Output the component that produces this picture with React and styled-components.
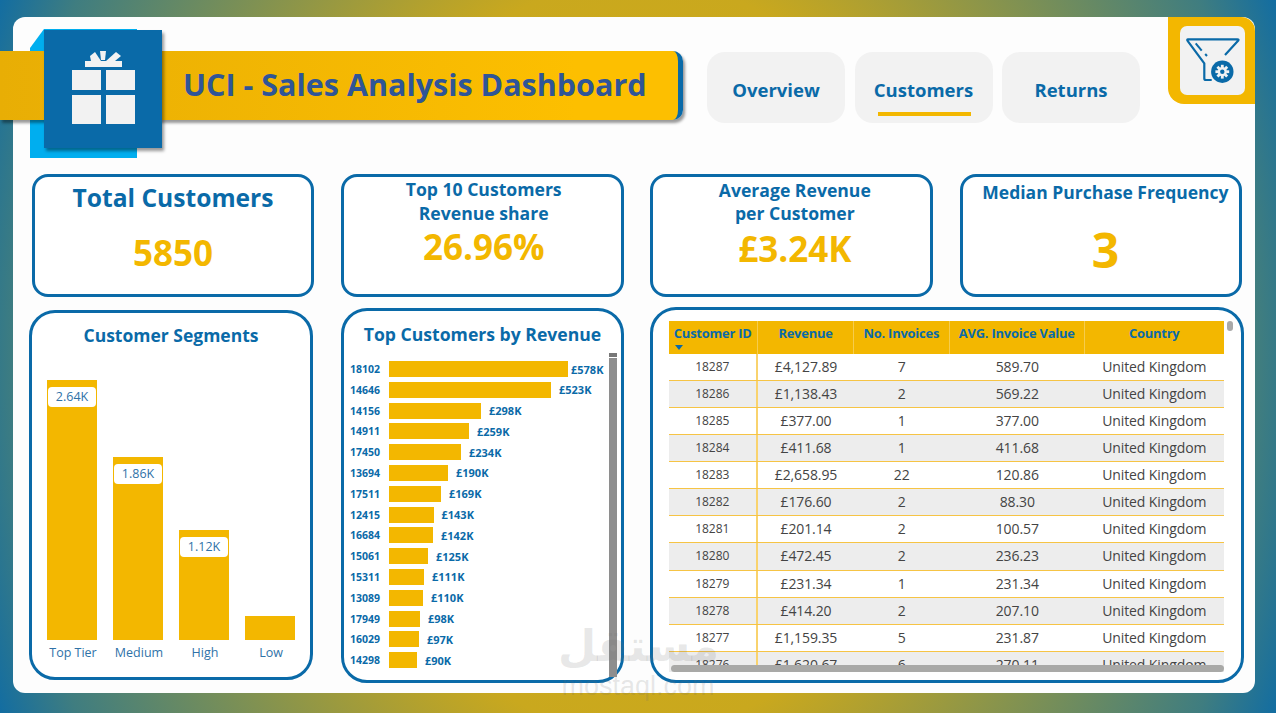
import React from "react";
import styled, { createGlobalStyle } from "styled-components";

const BLUE = "#0a6aa8";
const GOLD = "#f3b700";

const GlobalStyle = createGlobalStyle`
  html, body {
    margin: 0;
    padding: 0;
    width: 1276px;
    height: 713px;
    overflow: hidden;
    font-family: "Open Sans", "Noto Sans", sans-serif;
  }
`;

const Page = styled.div`
  width: 1276px;
  height: 713px;
  padding: 17px 21px 20px 13px;
  box-sizing: border-box;
  position: relative;
  overflow: hidden;
  background:
    radial-gradient(ellipse 760px 1000px at 50% 50%, #d6ad10 0%, #c9a81e 38%, #3f7d80 82%, #0a6aa8 93%);
`;

const Panel = styled.div`
  width: 1242px;
  height: 676px;
  background: #fdfdfd;
  border-radius: 12px;
  box-sizing: border-box;
`;

const Header = styled.header`
  display: flex;
  align-items: flex-start;
  height: 157px;
`;

const Brand = styled.div`
  position: relative;
  margin: 34px 0 0 -13px;
  width: 683px;
  height: 69px;
  flex: none;
`;

const Ribbon = styled.div`
  position: relative;
  height: 100%;
  box-sizing: border-box;
  padding: 0 0 3px 183px;
  display: flex;
  align-items: center;
  background: linear-gradient(90deg, #e8ae05 0%, #fdbf00 85%);
  border-right: 5px solid ${BLUE};
  border-radius: 0 10px 10px 0;
  box-shadow: 2px 3px 3px rgba(0, 0, 0, 0.4);
`;

const Title = styled.h1`
  margin: 0;
  font-size: 30.5px;
  font-weight: 700;
  color: #2f5597;
  white-space: nowrap;
`;

const BackTile = styled.div`
  position: absolute;
  left: 30px;
  top: -22px;
  width: 107px;
  height: 129px;
  background: #00aeef;
  clip-path: polygon(14px 0, 100% 0, 100% 100%, 0 100%, 0 19px);
`;

const IconTile = styled.div`
  position: absolute;
  left: 44px;
  top: -21px;
  width: 118px;
  height: 118px;
  background: ${BLUE};
  box-shadow: 2px 3px 3px rgba(0, 0, 0, 0.4);
`;

const Tabs = styled.nav`
  display: flex;
  gap: 9.5px;
  margin: 35px 0 0 24px;
`;

const Tab = styled.div`
  position: relative;
  width: 138px;
  height: 71px;
  display: flex;
  align-items: center;
  justify-content: center;
  padding-top: 3px;
  box-sizing: border-box;
  background: #f2f2f2;
  border-radius: 18px;
  color: ${BLUE};
  font-size: 18.5px;
  font-weight: 700;
  ${(p) =>
    p.$active &&
    `&::after {
      content: "";
      position: absolute;
      left: 23px;
      right: 22px;
      bottom: 7px;
      height: 4px;
      background: ${GOLD};
    }`}
`;

const FilterTile = styled.div`
  margin-left: auto;
  width: 87px;
  height: 87px;
  box-sizing: border-box;
  padding: 9px 10px 9px 12px;
  background: ${GOLD};
  border-radius: 0 14px 0 16px;
`;

const FilterBox = styled.div`
  width: 65px;
  height: 69px;
  background: #f2f2f2;
  border-radius: 7px;
`;

const KpiRow = styled.section`
  display: grid;
  grid-template-columns: 282px 283px 283px 282px;
  column-gap: 26.67px;
  padding-left: 19px;
`;

const KpiCard = styled.div`
  height: 123px;
  box-sizing: border-box;
  border: 3.5px solid ${BLUE};
  border-radius: 16px;
  display: flex;
  flex-direction: column;
  align-items: center;
  padding-top: ${(p) => p.$pad}px;
  padding-left: ${(p) => p.$shift}px;
  background: #fff;
`;

const KpiLabel = styled.div`
  color: ${BLUE};
  font-weight: 700;
  font-size: ${(p) => p.$size}px;
  line-height: ${(p) => p.$line}px;
  text-align: center;
  white-space: nowrap;
`;

const KpiValue = styled.div`
  color: ${GOLD};
  font-weight: 700;
  font-size: ${(p) => p.$size}px;
  line-height: 1;
  margin-top: ${(p) => p.$gap}px;
`;

const LowerRow = styled.section`
  display: grid;
  grid-template-columns: 312px 309px 594px;
  margin-top: 10px;
  padding-left: 16px;
  align-items: start;
`;

const ChartCard = styled.div`
  position: relative;
  width: ${(p) => p.$width}px;
  height: ${(p) => p.$height}px;
  margin-top: ${(p) => p.$top}px;
  box-sizing: border-box;
  border: 3.5px solid ${BLUE};
  border-radius: 26px;
  background: #fff;
`;

const ChartTitle = styled.div`
  color: ${BLUE};
  font-weight: 700;
  font-size: ${(p) => p.$size}px;
  text-align: center;
  line-height: 24px;
  padding-top: ${(p) => p.$pad}px;
  white-space: nowrap;
`;

const SegmentColumns = styled.div`
  display: flex;
  gap: 16px;
  align-items: flex-end;
  height: 260px;
  margin: 33px 0 0 15px;
`;

const Segment = styled.div`
  position: relative;
  width: 50px;
  height: ${(p) => p.$h}px;
  background: ${GOLD};
`;

const SegmentValue = styled.span`
  position: absolute;
  left: 1px;
  top: 7px;
  width: 48px;
  height: 20px;
  line-height: 20px;
  background: #fff;
  border-radius: 4px;
  text-align: center;
  font-size: 12.5px;
  color: #2f72a8;
`;

const SegmentNames = styled.div`
  display: flex;
  gap: 16px;
  margin: 4px 0 0 16px;
`;

const SegmentName = styled.span`
  width: 50px;
  text-align: center;
  font-size: 12.5px;
  line-height: 17px;
  color: #2f72a8;
  white-space: nowrap;
`;

const BarList = styled.div`
  margin: 15px 0 0 6px;
  display: flex;
  flex-direction: column;
  gap: 4.8px;
`;

const BarRow = styled.div`
  display: flex;
  align-items: center;
  height: 16px;
  color: ${BLUE};
  font-size: 10.5px;
  font-weight: 700;
`;

const BarId = styled.span`
  width: 39px;
  flex: none;
`;

const Bar = styled.div`
  height: 16px;
  background: ${GOLD};
  width: ${(p) => p.$w}px;
`;

const BarValue = styled.span`
  font-size: 11px;
  margin-left: ${(p) => (p.$tight ? 3 : 8)}px;
`;

const VScroll = styled.div`
  position: absolute;
  top: 47px;
  right: 4px;
  bottom: 3px;
  width: 8px;
  background: #8e8e8e;
  &::before {
    content: "";
    position: absolute;
    top: -5px;
    left: 0;
    right: 0;
    height: 4px;
    background: #777;
  }
`;

const TableClip = styled.div`
  position: relative;
  margin: 10.5px 0 0 15.5px;
  width: 555px;
  height: 351px;
  overflow: hidden;
`;

const HeadRow = styled.div`
  display: grid;
  grid-template-columns: 89.5px 96px 95.5px 135.5px 138.5px;
  height: 33px;
  background: ${GOLD};
`;

const HeadCell = styled.div`
  position: relative;
  text-align: center;
  color: ${BLUE};
  font-size: 12.9px;
  font-weight: 700;
  line-height: 25px;
  white-space: nowrap;
  letter-spacing: -0.2px;
  border-right: 1px solid rgba(255, 255, 255, 0.3);
  &:last-child {
    border-right: 0;
  }
`;

const SortArrow = styled.i`
  position: absolute;
  left: 6px;
  top: 24px;
  width: 0;
  height: 0;
  border-left: 4px solid transparent;
  border-right: 4px solid transparent;
  border-top: 5px solid ${BLUE};
`;

const DataRow = styled.div`
  display: grid;
  grid-template-columns: 89.5px 96px 95.5px 135.5px 138.5px;
  height: 27.15px;
  box-sizing: border-box;
  background: ${(p) => (p.$odd ? "#ededed" : "#fff")};
  border-bottom: 1.5px solid #f6c445;
`;

const DataCell = styled.div`
  text-align: center;
  font-size: ${(p) => (p.$small ? 12 : 14)}px;
  line-height: 26px;
  color: #444;
  white-space: nowrap;
  letter-spacing: -0.1px;
  border-right: ${(p) => (p.$small ? "2px solid #f9d36e" : "0")};
`;

const HScroll = styled.div`
  position: absolute;
  left: 2px;
  right: 0;
  bottom: 0;
  height: 6.5px;
  background: #a9a9a7;
  border-radius: 4px;
`;

const TableThumb = styled.div`
  position: absolute;
  top: 10.5px;
  right: 8px;
  width: 6px;
  height: 10px;
  border-radius: 3px;
  background: #a9a9a9;
`;

const Watermark = styled.div`
  position: absolute;
  left: 558px;
  top: 618px;
  width: 160px;
  text-align: center;
  color: rgba(110, 110, 110, 0.17);
  pointer-events: none;
`;

const WatermarkArabic = styled.div`
  font-family: "DejaVu Sans", sans-serif;
  font-weight: 700;
  font-size: 44px;
  line-height: 56px;
  white-space: nowrap;
`;

const WatermarkLatin = styled.div`
  font-family: "Liberation Sans", sans-serif;
  font-size: 27px;
  line-height: 24px;
`;

const GiftIcon = () => (
  <svg width="118" height="118" viewBox="0 0 118 118" fill="#f2f2f2">
    <rect x="28" y="40" width="29" height="20" />
    <rect x="62" y="40" width="29" height="20" />
    <rect x="28" y="65" width="29" height="29" />
    <rect x="62" y="65" width="29" height="29" />
    <rect x="41" y="31" width="37" height="6" />
    <polygon points="46,26 51,22 57,31 47,31" />
    <polygon points="56,21 62,21 61,30 57,30" />
    <polygon points="72,22 77,26 71,31 62,31" />
  </svg>
);

const FunnelGearIcon = () => {
  const teeth = [0, 45, 90, 135, 180, 225, 270, 315];
  return (
    <svg width="65" height="69" viewBox="0 0 65 69" fill="none">
      <path
        d="M45 29 L58.3 14.6 Q59 13.3 57.5 13.3 L8 13.3 Q6.7 13.3 7.6 14.8 L24.3 37.3 L24.3 52.5 Q24.3 54 26 54 L31.7 54"
        stroke={BLUE}
        strokeWidth="2.2"
        strokeLinejoin="round"
      />
      <path d="M15.7 17.3 L21.7 24.7" stroke={BLUE} strokeWidth="2" />
      <path d="M25.2 28 L27 30" stroke={BLUE} strokeWidth="2" />
      <circle cx="42.3" cy="45.7" r="11.2" fill={BLUE} />
      <circle cx="42.3" cy="45.7" r="4.6" fill="#f2f2f2" />
      {teeth.map((a) => (
        <rect
          key={a}
          x="40.9"
          y="38.8"
          width="2.8"
          height="3"
          fill="#f2f2f2"
          transform={`rotate(${a} 42.3 45.7)`}
        />
      ))}
      <circle cx="42.3" cy="45.7" r="2.2" fill={BLUE} />
    </svg>
  );
};

const segments = [
  { name: "Top Tier", value: "2.64K", h: 260 },
  { name: "Medium", value: "1.86K", h: 183 },
  { name: "High", value: "1.12K", h: 110 },
  { name: "Low", h: 24 },
];

const topCustomers = [
  ["18102", "£578K", 179],
  ["14646", "£523K", 162],
  ["14156", "£298K", 92],
  ["14911", "£259K", 80],
  ["17450", "£234K", 72],
  ["13694", "£190K", 59],
  ["17511", "£169K", 52],
  ["12415", "£143K", 44.5],
  ["16684", "£142K", 44],
  ["15061", "£125K", 39],
  ["15311", "£111K", 35],
  ["13089", "£110K", 34],
  ["17949", "£98K", 31],
  ["16029", "£97K", 30],
  ["14298", "£90K", 28],
];

const rows = [
  ["18287", "£4,127.89", "7", "589.70"],
  ["18286", "£1,138.43", "2", "569.22"],
  ["18285", "£377.00", "1", "377.00"],
  ["18284", "£411.68", "1", "411.68"],
  ["18283", "£2,658.95", "22", "120.86"],
  ["18282", "£176.60", "2", "88.30"],
  ["18281", "£201.14", "2", "100.57"],
  ["18280", "£472.45", "2", "236.23"],
  ["18279", "£231.34", "1", "231.34"],
  ["18278", "£414.20", "2", "207.10"],
  ["18277", "£1,159.35", "5", "231.87"],
  ["18276", "£1,620.67", "6", "270.11"],
];

const App = () => (
  <Page>
    <GlobalStyle />
    <Panel>
      <Header>
        <Brand>
          <BackTile />
          <Ribbon>
            <Title>UCI - Sales Analysis Dashboard</Title>
          </Ribbon>
          <IconTile>
            <GiftIcon />
          </IconTile>
        </Brand>
        <Tabs>
          <Tab>Overview</Tab>
          <Tab $active>Customers</Tab>
          <Tab>Returns</Tab>
        </Tabs>
        <FilterTile>
          <FilterBox>
            <FunnelGearIcon />
          </FilterBox>
        </FilterTile>
      </Header>

      <KpiRow>
        <KpiCard $pad={3} $shift={0}>
          <KpiLabel $size={24.6} $line={36}>Total Customers</KpiLabel>
          <KpiValue $size={35} $gap={19}>5850</KpiValue>
        </KpiCard>
        <KpiCard $pad={0} $shift={3}>
          <KpiLabel $size={17.6} $line={24}>
            Top 10 Customers
            <br />
            Revenue share
          </KpiLabel>
          <KpiValue $size={35} $gap={4}>26.96%</KpiValue>
        </KpiCard>
        <KpiCard $pad={1.5} $shift={6}>
          <KpiLabel $size={17.6} $line={23.5}>
            Average Revenue
            <br />
            per Customer
          </KpiLabel>
          <KpiValue $size={35} $gap={5}>£3.24K</KpiValue>
        </KpiCard>
        <KpiCard $pad={0} $shift={9}>
          <KpiLabel $size={17.5} $line={30}>Median Purchase Frequency</KpiLabel>
          <KpiValue $size={48} $gap={18.5}>3</KpiValue>
        </KpiCard>
      </KpiRow>

      <LowerRow>
        <ChartCard $width={284} $height={370} $top={3}>
          <ChartTitle $size={17.5} $pad={9.5}>Customer Segments</ChartTitle>
          <SegmentColumns>
            {segments.map((s) => (
              <Segment key={s.name} $h={s.h}>
                {s.value && <SegmentValue>{s.value}</SegmentValue>}
              </Segment>
            ))}
          </SegmentColumns>
          <SegmentNames>
            {segments.map((s) => (
              <SegmentName key={s.name}>{s.name}</SegmentName>
            ))}
          </SegmentNames>
        </ChartCard>

        <ChartCard $width={283} $height={375} $top={1}>
          <ChartTitle $size={17.6} $pad={11}>Top Customers by Revenue</ChartTitle>
          <BarList>
            {topCustomers.map(([id, value, w], i) => (
              <BarRow key={id}>
                <BarId>{id}</BarId>
                <Bar $w={w} />
                <BarValue $tight={i === 0}>{value}</BarValue>
              </BarRow>
            ))}
          </BarList>
          <VScroll />
        </ChartCard>

        <ChartCard $width={594} $height={376} $top={0}>
          <TableClip>
            <HeadRow>
              <HeadCell>
                Customer ID
                <SortArrow />
              </HeadCell>
              <HeadCell>Revenue</HeadCell>
              <HeadCell>No. Invoices</HeadCell>
              <HeadCell>AVG. Invoice Value</HeadCell>
              <HeadCell>Country</HeadCell>
            </HeadRow>
            {rows.map((r, i) => (
              <DataRow key={r[0]} $odd={i % 2 === 1}>
                <DataCell $small>{r[0]}</DataCell>
                <DataCell>{r[1]}</DataCell>
                <DataCell>{r[2]}</DataCell>
                <DataCell>{r[3]}</DataCell>
                <DataCell>United Kingdom</DataCell>
              </DataRow>
            ))}
            <HScroll />
          </TableClip>
          <TableThumb />
        </ChartCard>
      </LowerRow>
    </Panel>
    <Watermark>
      <WatermarkArabic>مستقل</WatermarkArabic>
      <WatermarkLatin>mostaql.com</WatermarkLatin>
    </Watermark>
  </Page>
);

export default App;
